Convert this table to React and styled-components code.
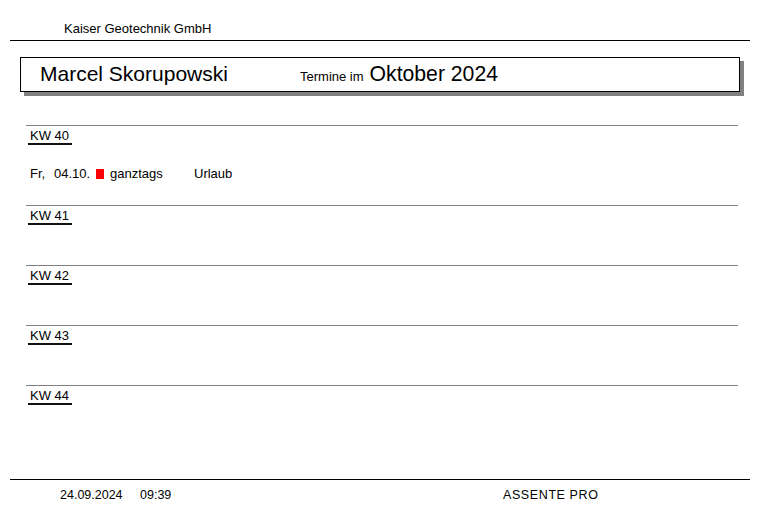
import styled, { createGlobalStyle } from "styled-components";

const GlobalStyle = createGlobalStyle`
  html, body {
    margin: 0;
    padding: 0;
    background: #ffffff;
  }
  body {
    font-family: "Liberation Sans", Arial, sans-serif;
    color: #000000;
  }
`;

const weeks = [
  {
    kw: "KW 40",
    entries: [
      { day: "Fr,", date: "04.10.", time: "ganztags", text: "Urlaub", color: "#ff0000" },
    ],
  },
  { kw: "KW 41", entries: [] },
  { kw: "KW 42", entries: [] },
  { kw: "KW 43", entries: [] },
  { kw: "KW 44", entries: [] },
];

export default function App() {
  return (
    <>
      <GlobalStyle />
      <Page>
        <Header>Kaiser Geotechnik GmbH</Header>
        <TitleBox>
          <Name>Marcel Skorupowski</Name>
          <Small>Termine im</Small>
          <Month>Oktober 2024</Month>
        </TitleBox>
        <Weeks>
          {weeks.map((w) => (
            <Week key={w.kw} $tall={w.entries.length > 0}>
              <WeekLabel>{w.kw}</WeekLabel>
              {w.entries.map((e) => (
                <Entry key={e.date}>
                  <Day>{e.day}</Day>
                  <DateCell>{e.date}</DateCell>
                  <Marker $color={e.color} />
                  <TimeCell>{e.time}</TimeCell>
                  <span>{e.text}</span>
                </Entry>
              ))}
            </Week>
          ))}
        </Weeks>
        <Footer>
          <FooterDate>24.09.2024</FooterDate>
          <FooterTime>09:39</FooterTime>
          <FooterBrand>ASSENTE PRO</FooterBrand>
        </Footer>
      </Page>
    </>
  );
}

const Page = styled.div`
  width: 780px;
  height: 519px;
  display: flex;
  flex-direction: column;
  overflow: hidden;
`;

const Header = styled.div`
  box-sizing: border-box;
  height: 41px;
  width: 740px;
  margin-left: 10px;
  padding: 21px 0 0 54px;
  font-size: 13px;
  line-height: 15px;
  border-bottom: 1px solid #000000;
`;

const TitleBox = styled.div`
  box-sizing: border-box;
  width: 720px;
  height: 35px;
  margin: 16px 0 0 20px;
  padding-left: 19px;
  display: flex;
  align-items: baseline;
  border: 1px solid #000000;
  box-shadow: 4px 4px 0 #808080;
  line-height: 32px;
`;

const Name = styled.span`
  width: 260px;
  font-size: 21px;
`;

const Small = styled.span`
  font-size: 13px;
  margin-right: 6px;
`;

const Month = styled.span`
  font-size: 21.2px;
`;

const Weeks = styled.div`
  width: 712px;
  margin: 33px 0 0 26px;
  display: flex;
  flex-direction: column;
`;

const Week = styled.div`
  box-sizing: border-box;
  height: ${(p) => (p.$tall ? "80px" : "60px")};
  border-top: 1px solid #808080;
  display: flex;
  flex-direction: column;
  align-items: flex-start;
`;

const WeekLabel = styled.div`
  box-sizing: border-box;
  width: 44px;
  margin-left: 2px;
  padding: 2px 2px 0;
  font-size: 13px;
  line-height: 15px;
  border-bottom: 2px solid #111111;
`;

const Entry = styled.div`
  margin-top: 21px;
  padding-left: 4px;
  display: flex;
  align-items: center;
  font-size: 13px;
  line-height: 16px;
`;

const Day = styled.span`
  width: 24px;
`;

const DateCell = styled.span`
  width: 42px;
`;

const Marker = styled.span`
  width: 8px;
  height: 10px;
  margin-right: 6px;
  background: ${(p) => p.$color};
`;

const TimeCell = styled.span`
  width: 84px;
`;

const Footer = styled.div`
  box-sizing: border-box;
  width: 740px;
  margin: 34px 0 0 10px;
  padding: 7px 0 0 50px;
  border-top: 1px solid #000000;
  display: flex;
  font-size: 12.5px;
  line-height: 16px;
`;

const FooterDate = styled.span`
  width: 80px;
`;

const FooterTime = styled.span`
  width: 363px;
`;

const FooterBrand = styled.span`
  letter-spacing: 0.6px;
`;
